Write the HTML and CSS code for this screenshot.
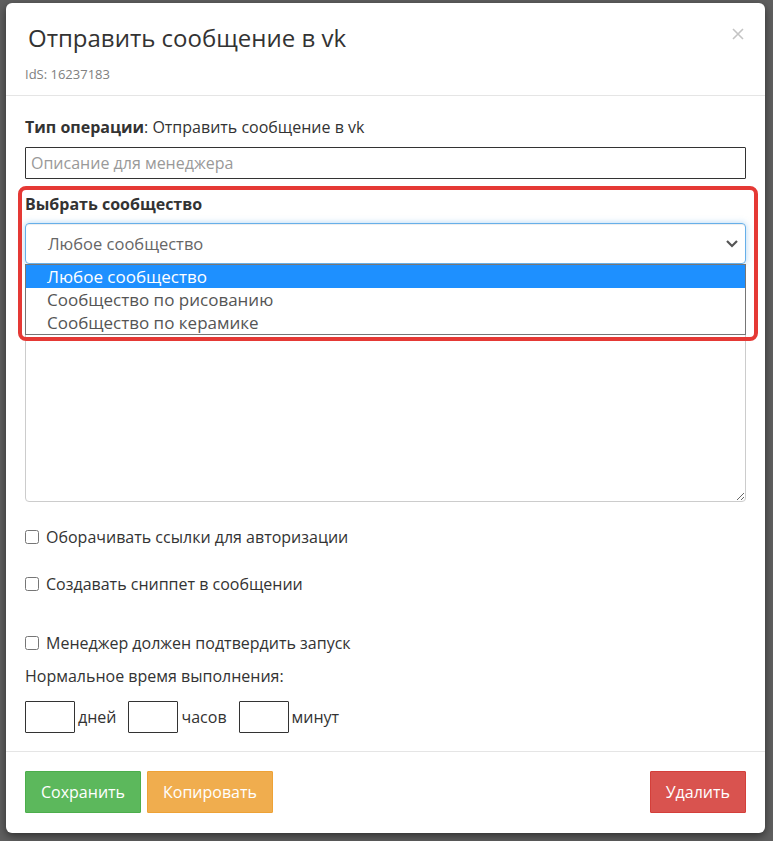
FILE: index.html
```html
<!DOCTYPE html>
<html>
<head>
  <meta charset="utf-8">
  <title>Отправить сообщение в vk</title>
  <link rel="stylesheet" href="styles.css">
</head>
<body>
  <div class="backdrop">
    <div class="modal">
      <div class="modal-header">
        <button class="close" type="button" aria-label="Закрыть">
          <svg width="12" height="12" viewBox="0 0 12 12"><path d="M1 1 L11 11 M11 1 L1 11" stroke="#c4c4c4" stroke-width="1.6" fill="none"/></svg>
        </button>
        <h4 class="modal-title">Отправить сообщение в vk</h4>
        <div class="ids">IdS: 16237183</div>
      </div>

      <div class="modal-body">
        <div class="op-type"><b>Тип операции</b>: Отправить сообщение в vk</div>
        <input type="text" class="field" placeholder="Описание для менеджера">

        <div class="group-section">
          <div class="highlight"></div>
          <div class="field-label">Выбрать сообщество</div>
          <div class="select-wrap">
            <div class="select">
              <span>Любое сообщество</span>
              <svg width="14" height="9" viewBox="0 0 14 9"><path d="M2 2 L7 7 L12 2" stroke="#555" stroke-width="2.2" fill="none"/></svg>
            </div>
            <ul class="options">
              <li class="active">Любое сообщество</li>
              <li>Сообщество по рисованию</li>
              <li>Сообщество по керамике</li>
            </ul>
          </div>
          <textarea class="message"></textarea>
        </div>

        <label class="check first"><input type="checkbox"> Оборачивать ссылки для авторизации</label>
        <label class="check second"><input type="checkbox"> Создавать сниппет в сообщении</label>
        <label class="check third"><input type="checkbox"> Менеджер должен подтвердить запуск</label>

        <div class="time-title">Нормальное время выполнения:</div>
        <div class="time-row">
          <input type="text" class="time-input"><span class="unit">дней</span>
          <input type="text" class="time-input"><span class="unit">часов</span>
          <input type="text" class="time-input"><span class="unit">минут</span>
        </div>
      </div>

      <div class="modal-footer">
        <button class="btn btn-success">Сохранить</button>
        <button class="btn btn-warning">Копировать</button>
        <button class="btn btn-danger">Удалить</button>
      </div>
    </div>
  </div>
</body>
</html>
```
FILE: styles.css
```css
/* Page */
body {
  margin: 0;
  background-color: #5f5f5f;
  font-family: "Open Sans", "Liberation Sans", sans-serif;
  color: #333;
}
.backdrop {
  padding: 3px 8px 8px 6px;
}

/* Modal */
.modal {
  width: 759px;
  background-color: #fff;
  border-radius: 6px;
  box-shadow: 0 3px 9px rgba(0, 0, 0, 0.5);
}
.modal-header {
  position: relative;
  padding: 22px 19px 12px;
  border-bottom: 1px solid #e5e5e5;
}
.modal-title {
  margin: 0 0 0 3px;
  font-size: 24px;
  font-weight: 400;
  line-height: 26px;
  color: #333;
}
.ids {
  margin-top: 14px;
  font-size: 13px;
  line-height: 18px;
  color: #808080;
}
.close {
  position: absolute;
  top: 25px;
  right: 21px;
  padding: 0;
  border: none;
  background: none;
  cursor: pointer;
}

.modal-body {
  padding: 21px 19px 0;
  font-size: 16px;
  line-height: 20px;
}
.op-type b {
  font-weight: 700;
}
.field {
  display: block;
  box-sizing: border-box;
  width: 100%;
  height: 32px;
  margin-top: 10px;
  padding: 0 5px;
  border: 1px solid #333;
  border-radius: 1px;
  font-family: inherit;
  font-size: 16px;
  color: #333;
}
.field::placeholder {
  color: #999;
}

/* Community select with its open list */
.group-section {
  position: relative;
  padding-top: 15px;
}
.highlight {
  position: absolute;
  left: -7px;
  top: 7px;
  width: 740px;
  height: 155px;
  box-sizing: border-box;
  border: 4px solid #e53935;
  border-radius: 8px;
  z-index: 3;
  pointer-events: none;
}
.field-label {
  font-weight: 700;
}
.select-wrap {
  position: relative;
  margin-top: 9px;
}
.select {
  display: flex;
  align-items: center;
  justify-content: space-between;
  box-sizing: border-box;
  height: 41px;
  padding: 0 6px 0 22px;
  border: 1px solid #66afe9;
  border-radius: 4px;
  box-shadow: inset 0 1px 1px rgba(0, 0, 0, 0.075), 0 0 6px rgba(102, 175, 233, 0.5);
  font-size: 16.5px;
  color: #666;
}
.options {
  position: absolute;
  left: 0;
  right: 0;
  top: 41px;
  margin: 0;
  padding: 0;
  list-style: none;
  background-color: #fff;
  border: 1px solid #767676;
  z-index: 2;
}
.options li {
  height: 23px;
  line-height: 23px;
  padding-left: 21px;
  font-size: 17px;
  color: #555;
}
.options li.active {
  background-color: #1e90ff;
  color: #fff;
}
.message {
  display: block;
  box-sizing: border-box;
  width: 100%;
  height: 224px;
  margin-top: 14px;
  border: 1px solid #ccc;
  border-radius: 4px;
  font-family: inherit;
}

/* Checkboxes */
.check {
  display: flex;
  align-items: center;
  color: #333;
}
.check input {
  margin: 0 7px 0 0;
  width: 14px;
  height: 14px;
}
.check.first {
  margin-top: 25px;
}
.check.second {
  margin-top: 27px;
}
.check.third {
  margin-top: 39px;
}
.time-title {
  margin-top: 13px;
}
.time-row {
  display: flex;
  align-items: center;
  height: 32px;
  margin-top: 15px;
}
.time-input {
  box-sizing: border-box;
  width: 50px;
  height: 32px;
  border: 1px solid #333;
  border-radius: 1px;
}
.unit {
  margin: 0 12px 0 3px;
}

/* Footer */
.modal-footer {
  display: flex;
  gap: 6px;
  margin-top: 18px;
  padding: 19px 19px 20px;
  border-top: 1px solid #e5e5e5;
}
.btn {
  height: 42px;
  padding: 0 15px;
  border: 1px solid transparent;
  border-radius: 1px;
  font-family: inherit;
  font-size: 16px;
  color: #fff;
  cursor: pointer;
}
.btn-success {
  background-color: #5cb85c;
  border-color: #4cae4c;
}
.btn-warning {
  background-color: #f0ad4e;
  border-color: #eea236;
}
.btn-danger {
  margin-left: auto;
  background-color: #d9534f;
  border-color: #d43f3a;
}
```
